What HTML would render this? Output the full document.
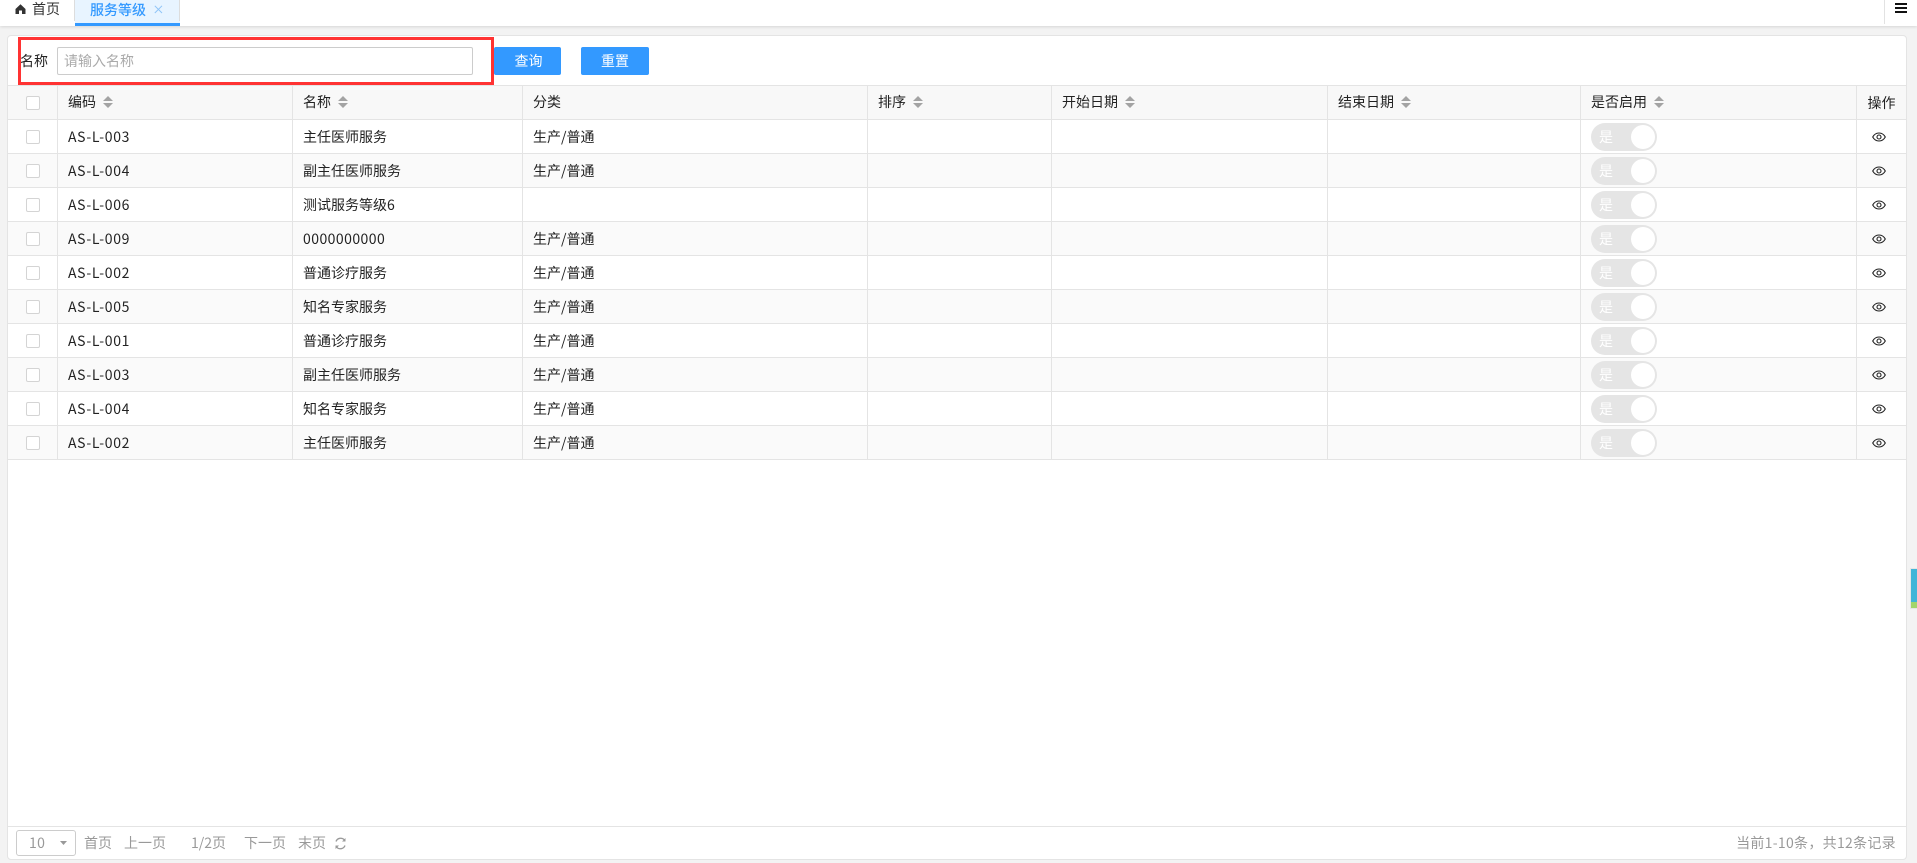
<!DOCTYPE html>
<html lang="zh-CN">
<head>
<meta charset="utf-8">
<title>服务等级</title>
<style>
*{box-sizing:border-box}
html,body{margin:0;padding:0}
body{width:1917px;height:863px;position:relative;overflow:hidden;background:#f3f3f3;color:#222;font:14px/20px "Noto Sans CJK SC","Liberation Sans",sans-serif}
.abs{position:absolute;white-space:nowrap}
#top{position:absolute;left:0;top:0;width:1917px;height:26px;background:#fff;box-shadow:0 1px 3px rgba(0,0,0,.12)}
#tab{position:absolute;left:75px;top:0;width:105px;height:26px;background:#e8f4ff;border-bottom:3px solid #39f;color:#39f}
#card{position:absolute;left:7px;top:35px;width:1900px;height:825px;background:#fff;border:1px solid #e4e4e4;border-radius:4px}
table{position:absolute;left:8px;top:85px;width:1898px;table-layout:fixed;border-collapse:separate;border-spacing:0;border-top:1px solid #e4e4e4}
th,td{height:34px;padding:0 0 0 10px;border-right:1px solid #e4e4e4;border-bottom:1px solid #e4e4e4;font-weight:400;text-align:left;white-space:nowrap;line-height:20px}
tr>*:last-child{border-right:0;padding:0;text-align:center}
tr>*:first-child{padding:0 0 0 18px}
th{background:#f8f8f8;padding-bottom:2px}
tbody tr:nth-child(even) td{background:#fafafa}
td{letter-spacing:.65px}
td.z{letter-spacing:0}
td.n{letter-spacing:.45px}
.cb{display:block;width:14px;height:14px;border:1px solid #d4d4d4;border-radius:2px;background:#fff}
.s{display:inline-block;vertical-align:-1px;margin-left:7px}
.sw{position:relative;display:block;width:66px;height:28px;border-radius:14px;background:#e5e5e5;color:#fff;line-height:28px;padding-left:8px;letter-spacing:0}
.sw:after{content:"";position:absolute;left:40px;top:2px;width:24px;height:24px;border-radius:50%;background:#fff}
.eye{display:block;margin:0 0 0 15px}
.g{color:#999;top:833px}
</style>
</head>
<body>
<div id="top"></div>
<svg class="abs" style="left:15px;top:4px" width="11" height="10" viewBox="0 0 11 10"><path d="M5.5 0.3 10.5 5V10H7V6.5H4V10H.5V5Z" fill="#333"/></svg>
<div class="abs" style="left:32px;top:-1px;color:#333">首页</div>
<div class="abs" style="left:74px;top:0;width:1px;height:21px;background:#ddd"></div>
<div id="tab"></div>
<div class="abs" style="left:90px;top:0;color:#39f;font-weight:500">服务等级</div>
<svg class="abs" style="left:154px;top:5px" width="9" height="9" viewBox="0 0 9 9"><path d="M.8.8 8 8M8 .8 .8 8" stroke="#8fc4f7" stroke-width="1" fill="none"/></svg>
<div class="abs" style="left:179px;top:0;width:1px;height:21px;background:#ddd"></div>
<div class="abs" style="left:1884px;top:0;width:1px;height:24px;background:#e2e2e2"></div>
<svg class="abs" style="left:1895px;top:2px" width="12" height="12" viewBox="0 0 12 12"><path d="M0 2H12M0 6H12M0 10H12" stroke="#111" stroke-width="2"/></svg>

<div id="card"></div>
<div class="abs" style="left:20px;top:51px;color:#222">名称</div>
<div class="abs" style="left:57px;top:47px;width:416px;height:28px;border:1px solid #ccc;border-radius:2px;background:#fff;color:#aaa;padding-left:6px;line-height:27px">请输入名称</div>
<div class="abs" style="left:494px;top:47px;width:67px;height:28px;background:#39f;border-radius:2px;color:#fff;text-align:center;line-height:28px;padding-left:2px">查询</div>
<div class="abs" style="left:581px;top:47px;width:68px;height:28px;background:#39f;border-radius:2px;color:#fff;text-align:center;line-height:28px">重置</div>
<div class="abs" style="left:18px;top:37px;width:476px;height:48px;border:3px solid #f33;z-index:3"></div>

<table>
<colgroup><col style="width:50px"><col style="width:235px"><col style="width:230px"><col style="width:345px"><col style="width:184px"><col style="width:276px"><col style="width:253px"><col style="width:276px"><col style="width:49px"></colgroup>
<thead><tr>
<th><i class="cb"></i></th>
<th>编码<svg class="s" width="10" height="12" viewBox="0 0 10 12"><path d="M5 0 10 5H0ZM0 7H10L5 12Z" fill="#a3a3a3"/></svg></th>
<th>名称<svg class="s" width="10" height="12" viewBox="0 0 10 12"><path d="M5 0 10 5H0ZM0 7H10L5 12Z" fill="#a3a3a3"/></svg></th>
<th>分类</th>
<th>排序<svg class="s" width="10" height="12" viewBox="0 0 10 12"><path d="M5 0 10 5H0ZM0 7H10L5 12Z" fill="#a3a3a3"/></svg></th>
<th>开始日期<svg class="s" width="10" height="12" viewBox="0 0 10 12"><path d="M5 0 10 5H0ZM0 7H10L5 12Z" fill="#a3a3a3"/></svg></th>
<th>结束日期<svg class="s" width="10" height="12" viewBox="0 0 10 12"><path d="M5 0 10 5H0ZM0 7H10L5 12Z" fill="#a3a3a3"/></svg></th>
<th>是否启用<svg class="s" width="10" height="12" viewBox="0 0 10 12"><path d="M5 0 10 5H0ZM0 7H10L5 12Z" fill="#a3a3a3"/></svg></th>
<th>操作</th>
</tr></thead>
<tbody>
<tr><td><i class="cb"></i></td><td>AS-L-003</td><td class="z">主任医师服务</td><td class="z">生产/普通</td><td></td><td></td><td></td><td><span class="sw">是</span></td><td><svg class="eye" width="14" height="10" viewBox="0 0 14 10"><path d="M.7 5C2.2 2.3 4.4 1 7 1s4.8 1.3 6.3 4C11.8 7.7 9.6 9 7 9S2.200 7.700.7 5Z" fill="none" stroke="#222" stroke-width="1.100"/><circle cx="7" cy="5" r="2" fill="none" stroke="#222" stroke-width="1.100"/></svg></td></tr>
<tr><td><i class="cb"></i></td><td>AS-L-004</td><td class="z">副主任医师服务</td><td class="z">生产/普通</td><td></td><td></td><td></td><td><span class="sw">是</span></td><td><svg class="eye" width="14" height="10" viewBox="0 0 14 10"><path d="M.7 5C2.2 2.3 4.4 1 7 1s4.8 1.3 6.3 4C11.8 7.7 9.6 9 7 9S2.200 7.700.7 5Z" fill="none" stroke="#222" stroke-width="1.100"/><circle cx="7" cy="5" r="2" fill="none" stroke="#222" stroke-width="1.100"/></svg></td></tr>
<tr><td><i class="cb"></i></td><td>AS-L-006</td><td class="z">测试服务等级6</td><td class="z"></td><td></td><td></td><td></td><td><span class="sw">是</span></td><td><svg class="eye" width="14" height="10" viewBox="0 0 14 10"><path d="M.7 5C2.2 2.3 4.4 1 7 1s4.8 1.3 6.3 4C11.8 7.7 9.6 9 7 9S2.200 7.700.7 5Z" fill="none" stroke="#222" stroke-width="1.100"/><circle cx="7" cy="5" r="2" fill="none" stroke="#222" stroke-width="1.100"/></svg></td></tr>
<tr><td><i class="cb"></i></td><td>AS-L-009</td><td class="n">0000000000</td><td class="z">生产/普通</td><td></td><td></td><td></td><td><span class="sw">是</span></td><td><svg class="eye" width="14" height="10" viewBox="0 0 14 10"><path d="M.7 5C2.2 2.3 4.4 1 7 1s4.8 1.3 6.3 4C11.8 7.7 9.6 9 7 9S2.200 7.700.7 5Z" fill="none" stroke="#222" stroke-width="1.100"/><circle cx="7" cy="5" r="2" fill="none" stroke="#222" stroke-width="1.100"/></svg></td></tr>
<tr><td><i class="cb"></i></td><td>AS-L-002</td><td class="z">普通诊疗服务</td><td class="z">生产/普通</td><td></td><td></td><td></td><td><span class="sw">是</span></td><td><svg class="eye" width="14" height="10" viewBox="0 0 14 10"><path d="M.7 5C2.2 2.3 4.4 1 7 1s4.8 1.3 6.3 4C11.8 7.7 9.6 9 7 9S2.200 7.700.7 5Z" fill="none" stroke="#222" stroke-width="1.100"/><circle cx="7" cy="5" r="2" fill="none" stroke="#222" stroke-width="1.100"/></svg></td></tr>
<tr><td><i class="cb"></i></td><td>AS-L-005</td><td class="z">知名专家服务</td><td class="z">生产/普通</td><td></td><td></td><td></td><td><span class="sw">是</span></td><td><svg class="eye" width="14" height="10" viewBox="0 0 14 10"><path d="M.7 5C2.2 2.3 4.4 1 7 1s4.8 1.3 6.3 4C11.8 7.7 9.6 9 7 9S2.200 7.700.7 5Z" fill="none" stroke="#222" stroke-width="1.100"/><circle cx="7" cy="5" r="2" fill="none" stroke="#222" stroke-width="1.100"/></svg></td></tr>
<tr><td><i class="cb"></i></td><td>AS-L-001</td><td class="z">普通诊疗服务</td><td class="z">生产/普通</td><td></td><td></td><td></td><td><span class="sw">是</span></td><td><svg class="eye" width="14" height="10" viewBox="0 0 14 10"><path d="M.7 5C2.2 2.3 4.4 1 7 1s4.8 1.3 6.3 4C11.8 7.7 9.6 9 7 9S2.200 7.700.7 5Z" fill="none" stroke="#222" stroke-width="1.100"/><circle cx="7" cy="5" r="2" fill="none" stroke="#222" stroke-width="1.100"/></svg></td></tr>
<tr><td><i class="cb"></i></td><td>AS-L-003</td><td class="z">副主任医师服务</td><td class="z">生产/普通</td><td></td><td></td><td></td><td><span class="sw">是</span></td><td><svg class="eye" width="14" height="10" viewBox="0 0 14 10"><path d="M.7 5C2.2 2.3 4.4 1 7 1s4.8 1.3 6.3 4C11.8 7.7 9.6 9 7 9S2.200 7.700.7 5Z" fill="none" stroke="#222" stroke-width="1.100"/><circle cx="7" cy="5" r="2" fill="none" stroke="#222" stroke-width="1.100"/></svg></td></tr>
<tr><td><i class="cb"></i></td><td>AS-L-004</td><td class="z">知名专家服务</td><td class="z">生产/普通</td><td></td><td></td><td></td><td><span class="sw">是</span></td><td><svg class="eye" width="14" height="10" viewBox="0 0 14 10"><path d="M.7 5C2.2 2.3 4.4 1 7 1s4.8 1.3 6.3 4C11.8 7.7 9.6 9 7 9S2.200 7.700.7 5Z" fill="none" stroke="#222" stroke-width="1.100"/><circle cx="7" cy="5" r="2" fill="none" stroke="#222" stroke-width="1.100"/></svg></td></tr>
<tr><td><i class="cb"></i></td><td>AS-L-002</td><td class="z">主任医师服务</td><td class="z">生产/普通</td><td></td><td></td><td></td><td><span class="sw">是</span></td><td><svg class="eye" width="14" height="10" viewBox="0 0 14 10"><path d="M.7 5C2.2 2.3 4.4 1 7 1s4.8 1.3 6.3 4C11.8 7.7 9.6 9 7 9S2.200 7.700.7 5Z" fill="none" stroke="#222" stroke-width="1.100"/><circle cx="7" cy="5" r="2" fill="none" stroke="#222" stroke-width="1.100"/></svg></td></tr>
</tbody>
</table>

<div class="abs" style="left:8px;top:826px;width:1898px;height:1px;background:#e4e4e4"></div>
<div class="abs" style="left:16px;top:830px;width:60px;height:26px;border:1px solid #ccc;border-radius:3px;background:#fff"></div>
<div class="abs g" style="left:29px;font-size:14px;letter-spacing:.4px">10</div>
<svg class="abs" style="left:60px;top:841px" width="7" height="4" viewBox="0 0 7 4"><path d="M0 0H7L3.500 4Z" fill="#999"/></svg>
<div class="abs g" style="left:84px">首页</div>
<div class="abs g" style="left:124px">上一页</div>
<div class="abs g" style="left:191px">1/2页</div>
<div class="abs g" style="left:244px">下一页</div>
<div class="abs g" style="left:298px">末页</div>
<svg class="abs" style="left:334px;top:837px" width="13" height="13" viewBox="0 0 13 13"><path d="M2 4.500A5 5 0 0 1 10.500 3M11 8.500A5 5 0 0 1 2.500 10" fill="none" stroke="#999" stroke-width="1.300"/><path d="M11.500 1V4.500H8ZM1.500 12V8.500H5Z" fill="#999"/></svg>
<div class="abs g" style="right:21px;letter-spacing:.3px">当前1-10条，共12条记录</div>

<div class="abs" style="left:1910px;top:568px;width:7px;height:41px;background:#e6e6e6"></div>
<div class="abs" style="left:1911px;top:569px;width:6px;height:33px;background:#40b5d8"></div>
<div class="abs" style="left:1911px;top:602px;width:6px;height:6px;background:#a3d56b"></div>
</body>
</html>
